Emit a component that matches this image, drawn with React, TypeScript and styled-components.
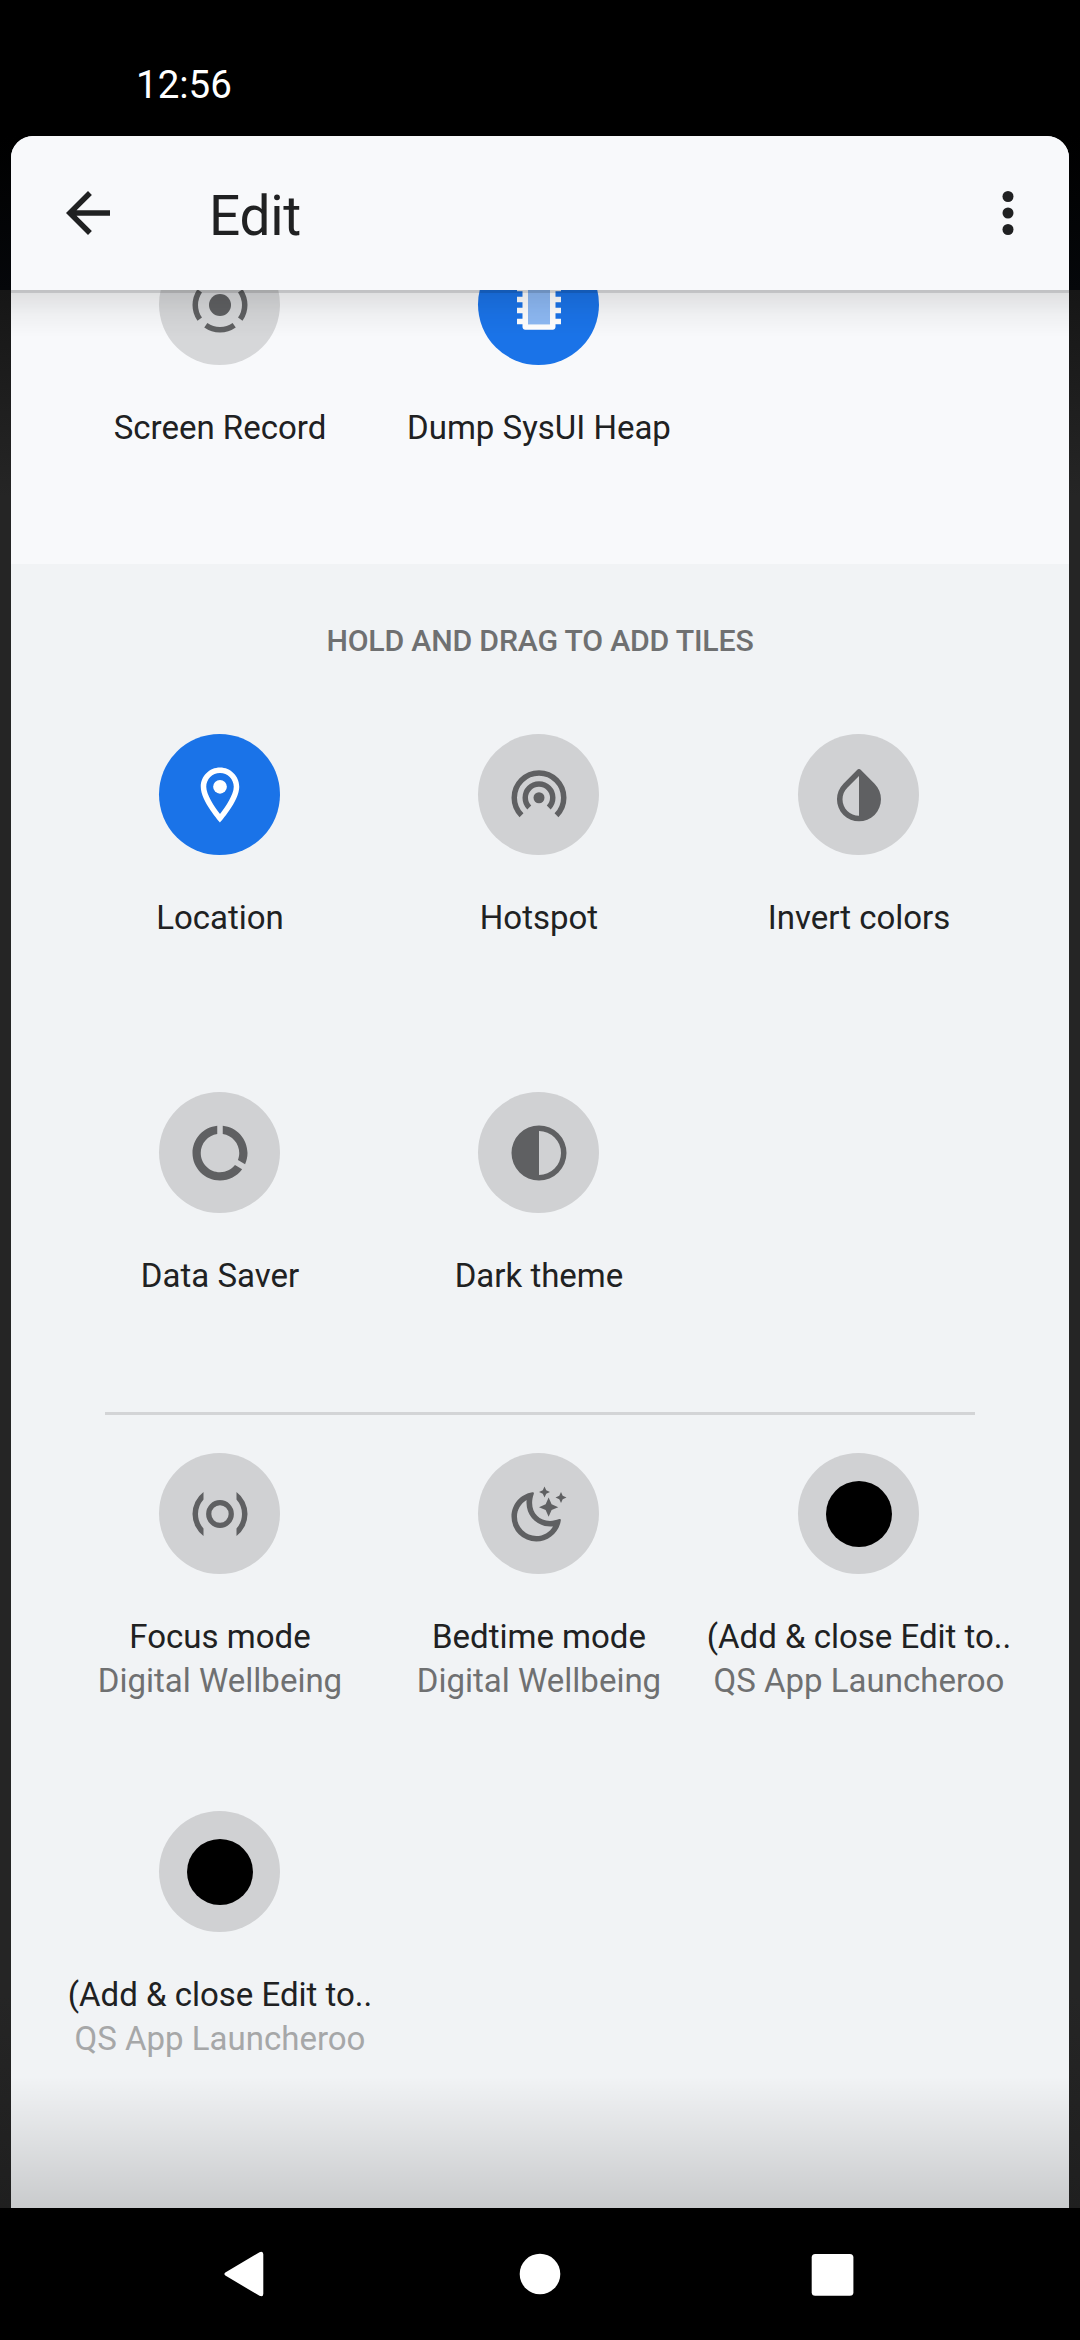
import React from 'react';
import styled, { createGlobalStyle } from 'styled-components';

const GlobalStyle = createGlobalStyle`
  * { box-sizing: border-box; }
  body { margin: 0; background: #000; font-family: Roboto, "Noto Sans", sans-serif; }
`;

const Screen = styled.div`
  width: 1080px;
  height: 2340px;
  display: flex;
  flex-direction: column;
  background: #000;
  overflow: hidden;
`;

const StatusBar = styled.header`
  height: 136px;
  padding: 62px 0 0 136px;
  color: #fff;
  font-size: 38.5px;
  line-height: 45px;
`;

const Backdrop = styled.div`
  height: 2072px;
  padding: 0 11px;
  background: linear-gradient(#000 0, #05070a 154px, #161616 154px, #252525 360px, #252525 1860px, #1f1f1f 2072px);
`;

const Panel = styled.main`
  position: relative;
  height: 100%;
  display: flex;
  flex-direction: column;
  background: #f1f3f5;
  border-radius: 22px 22px 0 0;
  overflow: hidden;
`;

const Toolbar = styled.div`
  flex: none;
  height: 154px;
  padding: 0 28px 0 44px;
  display: flex;
  align-items: center;
  background: #f8f9fb;
`;

const Title = styled.h1`
  flex: 1;
  margin: 0 0 0 88px;
  padding-top: 6px;
  font-size: 55px;
  line-height: 64px;
  letter-spacing: -0.3px;
  font-weight: 400;
  color: #202122;
`;

const IconButton = styled.button`
  width: 66px;
  height: 66px;
  padding: 0;
  border: 0;
  background: none;
  color: #202122;
  svg { display: block; width: 66px; height: 66px; fill: currentColor; }
`;

const Scroller = styled.div`
  position: relative;
  flex: 1;
  overflow: hidden;
  &::before {
    content: '';
    position: absolute;
    z-index: 1;
    inset: 0 0 auto;
    height: 44px;
    border-top: 3px solid rgba(0, 0, 0, 0.215);
    background: linear-gradient(rgba(0, 0, 0, 0.1), rgba(0, 0, 0, 0.035) 50%, transparent);
  }
  &::after {
    content: '';
    position: absolute;
    inset: auto 0 0;
    height: 132px;
    background: linear-gradient(transparent, rgba(0, 0, 0, 0.165));
  }
`;

const Section = styled.section<{ $active?: boolean }>`
  display: flow-root;
  height: ${(p) => (p.$active ? '274px' : 'auto')};
  background: ${(p) => (p.$active ? '#f8f9fb' : 'transparent')};
`;

const TileGrid = styled.div<{ $shift?: number }>`
  display: grid;
  grid-template-columns: 319px 319px 321px;
  grid-auto-rows: 358px;
  padding-left: 49px;
  margin-top: ${(p) => p.$shift ?? 0}px;
`;

const TileBox = styled.div`
  display: flex;
  flex-direction: column;
  align-items: center;
`;

const Disc = styled.div<{ $bg: string; $fg: string }>`
  width: 121px;
  height: 121px;
  padding: 28px 27px 27px 28px;
  border-radius: 50%;
  background: ${(p) => p.$bg};
  color: ${(p) => p.$fg};
  svg { display: block; width: 66px; height: 66px; fill: currentColor; }
`;

const Label = styled.div`
  margin-top: 41px;
  padding-left: 1px;
  font-size: 33px;
  line-height: 44px;
  white-space: nowrap;
  color: #202122;
`;

const SubLabel = styled(Label)<{ $faded?: boolean }>`
  margin-top: 0;
  color: ${(p) => (p.$faded ? '#a6a7a8' : '#6f7071')};
`;

const Hint = styled.h2`
  margin: 0;
  padding-top: 57px;
  height: 170px;
  text-align: center;
  font-size: 30.25px;
  line-height: 40px;
  letter-spacing: -0.2px;
  font-weight: 500;
  color: #6f7071;
`;

const Divider = styled.hr`
  width: 870px;
  height: 3px;
  margin: -38px auto 38px;
  border: 0;
  background: #d3d4d6;
`;

const NavBar = styled.nav`
  flex: 1;
  padding: 0 100px;
  display: grid;
  grid-template-columns: repeat(3, 1fr);
  place-items: center;
  svg { display: block; width: 66px; height: 66px; fill: #fff; }
`;

const star = (x: number, y: number, r: number) => {
  const w = r * 0.31;
  return `M${x} ${y - r}L${x + w} ${y - w}L${x + r} ${y}L${x + w} ${y + w}L${x} ${y + r}L${x - w} ${y + w}L${x - r} ${y}L${x - w} ${y - w}Z`;
};

const icons = {
  record: (
    <>
      <circle cx="12" cy="12" r="4" />
      <g fill="none" stroke="currentColor" strokeWidth="2">
        {[0, 90, 180, 270].map((a) => (
          <path key={a} d="M19.37 6.84A9 9 0 0 1 19.37 17.16" transform={`rotate(${a} 12 12)`} />
        ))}
      </g>
    </>
  ),
  memory: (
    <>
      <path opacity=".5" d="M8 5h8v14H8z" />
      <path fillRule="evenodd" d="M20 7V5h-2V4c0-.55-.45-1-1-1H7c-.55 0-1 .45-1 1v1H4v2h2v2H4v2h2v2H4v2h2v2H4v2h2v1c0 .55.45 1 1 1h10c.55 0 1-.45 1-1v-1h2v-2h-2v-2h2v-2h-2v-2h2V9h-2V7zM16 19H8V5h8z" />
    </>
  ),
  location: (
    <>
      <path d="M12 2C8.13 2 5 5.13 5 9c0 5.25 7 13 7 13s7-7.75 7-13c0-3.87-3.13-7-7-7zM7 9c0-2.76 2.24-5 5-5s5 2.24 5 5c0 2.88-2.88 7.19-5 9.88C9.92 16.21 7 11.85 7 9z" />
      <circle cx="12" cy="9" r="2.5" />
    </>
  ),
  hotspot: (
    <>
      <circle cx="12" cy="13" r="2" />
      <g fill="none" stroke="currentColor" strokeWidth="2">
        <path d="M8.46 16.54A5 5 0 1 1 15.54 16.54" />
        <path d="M5.64 19.36A9 9 0 1 1 18.36 19.36" />
      </g>
    </>
  ),
  invert: (
    <path d="M17.66 7.93L12.7 2.87c-.39-.39-1.02-.39-1.41 0L6.34 7.93c-3.12 3.12-3.12 8.19 0 11.31C7.9 20.8 9.95 21.58 12 21.58s4.1-.78 5.66-2.34c3.12-3.12 3.12-8.19 0-11.31zM12 19.59c-1.6 0-3.11-.62-4.24-1.76C6.62 16.69 6 15.19 6 13.59s.62-3.11 1.76-4.24L12 5.1v14.49z" />
  ),
  dataSaver: (
    <path d="M13 2.05v3.03c3.39.49 6 3.39 6 6.92 0 .9-.18 1.75-.48 2.54l2.6 1.53c.56-1.24.88-2.62.88-4.07 0-5.18-3.95-9.45-9-9.95zM12 19c-3.87 0-7-3.13-7-7 0-3.53 2.61-6.43 6-6.92V2.05c-5.06.5-9 4.76-9 9.95 0 5.52 4.47 10 9.99 10 3.31 0 6.24-1.61 8.06-4.09l-2.6-1.53C16.17 17.98 14.21 19 12 19z" />
  ),
  dark: <path fillRule="evenodd" d="M12 2a10 10 0 1 0 0 20a10 10 0 0 0 0-20zM12 4a8 8 0 0 1 0 16z" />,
  focus: (
    <>
      <circle cx="12" cy="12" r="4.1" fill="none" stroke="currentColor" strokeWidth="1.9" />
      <path d="M6 4A10 10 0 0 0 6 20V17.29A8 8 0 0 1 6 6.71ZM18 4A10 10 0 0 1 18 20V17.29A8 8 0 0 0 18 6.71Z" />
    </>
  ),
  bedtime: (
    <>
      <path
        fillRule="evenodd"
        d="M9.6 4.1C5.2 4.8 2 8.5 2 13a9 9 0 0 0 9 9c4.5 0 8.3-3.3 8.95-7.7c.07-.4-.2-.6-.6-.45C18.2 14.3 17.2 14.5 16 14.5C12.2 14.5 9.5 11.8 9.5 8C9.5 6.8 9.7 5.8 10.1 4.7c.15-.4-.1-.65-.5-.6zM7.5 6.95C5.4 8.2 4 10.4 4 13a7 7 0 0 0 7 7c2.6 0 4.9-1.4 6.1-3.5C11.8 17.1 6.9 12.9 7.5 6.95z"
      />
      <path d={star(15.5, 9.5, 3.5) + star(14, 4, 2) + star(20, 6, 2)} />
    </>
  ),
  dot: <circle cx="12" cy="12" r="12" fill="#000" />,
};

type TileData = { icon: keyof typeof icons; label: string; sub?: string; on?: boolean; faded?: boolean };

const current: TileData[] = [
  { icon: 'record', label: 'Screen Record' },
  { icon: 'memory', label: 'Dump SysUI Heap', on: true },
];
const system: TileData[] = [
  { icon: 'location', label: 'Location', on: true },
  { icon: 'hotspot', label: 'Hotspot' },
  { icon: 'invert', label: 'Invert colors' },
  { icon: 'dataSaver', label: 'Data Saver' },
  { icon: 'dark', label: 'Dark theme' },
];
const others: TileData[] = [
  { icon: 'focus', label: 'Focus mode', sub: 'Digital Wellbeing' },
  { icon: 'bedtime', label: 'Bedtime mode', sub: 'Digital Wellbeing' },
  { icon: 'dot', label: '(Add & close Edit to..', sub: 'QS App Launcheroo' },
  { icon: 'dot', label: '(Add & close Edit to..', sub: 'QS App Launcheroo', faded: true },
];

const Tiles = ({ items, shift, offBg = '#d0d1d3' }: { items: TileData[]; shift?: number; offBg?: string }) => (
  <TileGrid $shift={shift}>
    {items.map((t, i) => (
      <TileBox key={i}>
        <Disc $bg={t.on ? '#1a73e8' : offBg} $fg={t.on ? '#fff' : '#5f6062'}>
          <svg viewBox="0 0 24 24">{icons[t.icon]}</svg>
        </Disc>
        <Label>{t.label}</Label>
        {t.sub && <SubLabel $faded={t.faded}>{t.sub}</SubLabel>}
      </TileBox>
    ))}
  </TileGrid>
);

export default function App() {
  return (
    <Screen>
      <GlobalStyle />
      <StatusBar>12:56</StatusBar>
      <Backdrop>
        <Panel>
          <Toolbar>
            <IconButton aria-label="Back">
              <svg viewBox="0 0 24 24">
                <path d="M20 11H7.83l5.59-5.59L12 4l-8 8 8 8 1.41-1.41L7.83 13H20v-2z" />
              </svg>
            </IconButton>
            <Title>Edit</Title>
            <IconButton aria-label="More options">
              <svg viewBox="0 0 24 24">
                <circle cx="12" cy="6" r="2" />
                <circle cx="12" cy="12" r="2" />
                <circle cx="12" cy="18" r="2" />
              </svg>
            </IconButton>
          </Toolbar>
          <Scroller>
            <Section $active>
              <Tiles items={current} shift={-46} offBg="#d6d7d9" />
            </Section>
            <Section>
              <Hint>HOLD AND DRAG TO ADD TILES</Hint>
              <Tiles items={system} />
              <Divider />
              <Tiles items={others} />
            </Section>
          </Scroller>
        </Panel>
      </Backdrop>
      <NavBar>
        <svg viewBox="0 0 66 66">
          <path d="M13 30.4L45.5 11.2Q49.3 9.6 49.3 13.3V52.7Q49.3 56.4 45.5 54.8L13 35.6Q7.6 33 13 30.4Z" />
        </svg>
        <svg viewBox="0 0 66 66">
          <circle cx="33" cy="33" r="20.3" />
        </svg>
        <svg viewBox="0 0 66 66">
          <rect x="11.7" y="13" width="41.7" height="41.7" rx="3.5" />
        </svg>
      </NavBar>
    </Screen>
  );
}
